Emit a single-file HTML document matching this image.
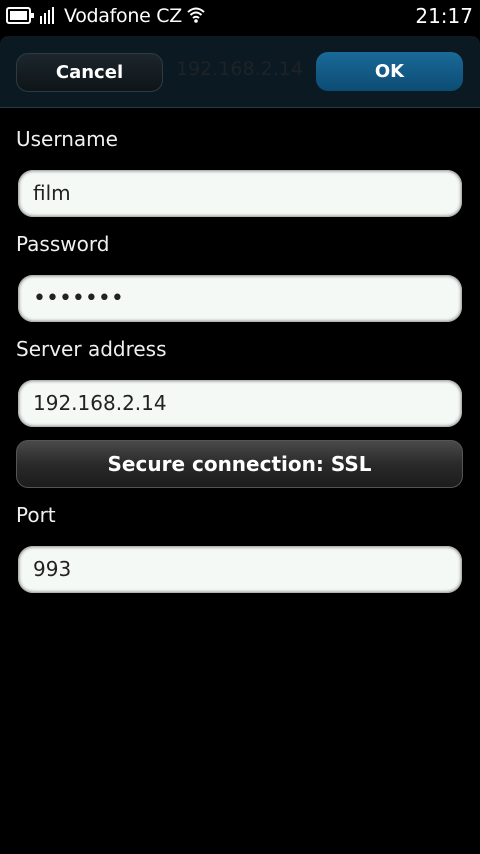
<!DOCTYPE html>
<html><head><meta charset="utf-8"><style>
body{margin:0;width:480px;height:854px;background:#000;font-family:"DejaVu Sans","Liberation Sans",sans-serif;color:#fff;position:relative;overflow:hidden}
.abs{position:absolute}
.lbl{position:absolute;left:16px;font-size:20px;color:#f0f0f0}
.fld{position:absolute;left:18px;width:444px;height:47px;border-radius:15px;background:#f5f9f6;box-shadow:inset 0 0 3px 1px #888;color:#222;font-size:20px;box-sizing:border-box;padding-left:15px;line-height:47px}
</style></head><body>
<svg class="abs" style="left:6px;top:7px" width="28" height="18" viewBox="0 0 28 18"><rect x="1" y="1" width="23" height="15" rx="2" fill="none" stroke="#fff" stroke-width="2"/><rect x="4" y="4" width="17" height="9" fill="#fff"/><rect x="25" y="6" width="3" height="5" fill="#fff"/></svg>
<svg class="abs" style="left:39px;top:6px" width="20" height="19"><rect x="1" y="10" width="2" height="8" fill="#fff"/><rect x="5" y="7" width="2" height="11" fill="#fff"/><rect x="9" y="4" width="2" height="14" fill="#fff"/><rect x="13" y="1" width="2" height="17" fill="#fff"/></svg>
<div class="abs" style="left:64px;top:5px;font-size:19px;letter-spacing:-0.3px">Vodafone CZ</div>
<svg class="abs" style="left:186px;top:6px" width="20" height="18" viewBox="0 0 20 18"><path d="M2 6 Q10 -1 18 6 M4.5 9 Q10 4 15.5 9 M7 12 Q10 9.5 13 12" fill="none" stroke="#fff" stroke-width="2"/><circle cx="10" cy="15" r="1.8" fill="#fff"/></svg>
<div class="abs" style="right:7px;top:4px;font-size:20px">21:17</div>
<div class="abs" style="left:0;top:36px;width:480px;height:71px;background:#0b1a22;border-radius:8px 8px 0 0;border-bottom:1px solid #2a3a44"></div>
<div class="abs" style="left:16px;top:53px;width:147px;height:39px;border-radius:12px;background:linear-gradient(#1c262c,#0e1519);border:1px solid #2f3a40;box-sizing:border-box;text-align:center;line-height:37px;font-weight:bold;font-size:18px">Cancel</div>
<div class="abs" style="left:176px;top:58px;font-size:19px;color:#1d2226">192.168.2.14</div>
<div class="abs" style="left:316px;top:52px;width:147px;height:39px;border-radius:12px;background:linear-gradient(#1a6a98,#0c4c74);text-align:center;line-height:39px;font-weight:bold;font-size:18px">OK</div>
<div class="lbl" style="top:127px">Username</div>
<div class="fld" style="top:170px">film</div>
<div class="lbl" style="top:232px">Password</div>
<div class="fld" style="top:275px;font-size:22px;letter-spacing:0px">•••••••</div>
<div class="lbl" style="top:337px">Server address</div>
<div class="fld" style="top:380px">192.168.2.14</div>
<div class="abs" style="left:16px;top:440px;width:447px;height:48px;border-radius:12px;background:linear-gradient(#4a4a4a,#2a2a2a 50%,#1c1c1c);border:1px solid #555;box-sizing:border-box;text-align:center;line-height:46px;font-weight:bold;font-size:20px">Secure connection: SSL</div>
<div class="lbl" style="top:503px">Port</div>
<div class="fld" style="top:546px">993</div>
</body></html>
